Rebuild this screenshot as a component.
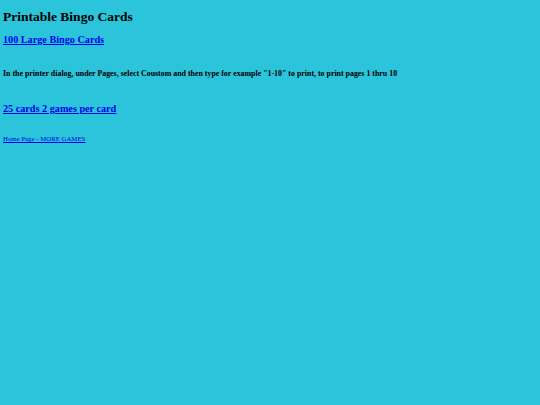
export default function App() {
  return (
    <div className="min-h-[405px] w-full bg-[#2cc4da] px-[3px] pt-[8px] text-black font-['Liberation_Serif',serif]">
      <h1 className="text-[13.5px] leading-[17px] font-bold">Printable Bingo Cards</h1>
      <a href="#" className="mt-[8px] block text-[10.2px] leading-[13px] font-bold text-[#0000ee] underline">
        100 Large Bingo Cards
      </a>
      <p className="mt-[23px] text-[7.9px] leading-[10px] font-bold">
        In the printer dialog, under Pages, select Coustom and then type for example "1-10" to print, to print pages 1 thru 10
      </p>
      <a href="#" className="mt-[23px] block text-[10.2px] leading-[13px] font-bold text-[#0000ee] underline">
        25 cards 2 games per card
      </a>
      <a href="#" className="mt-[20px] block text-[6.8px] leading-[8px] text-[#0000ee] underline">
        Home Page - MORE GAMES
      </a>
    </div>
  );
}
